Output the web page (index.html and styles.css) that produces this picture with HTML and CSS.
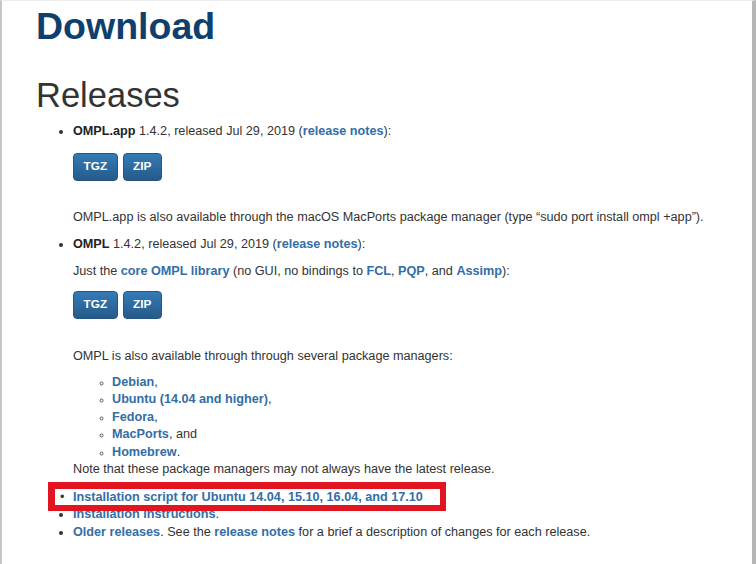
FILE: index.html
```html
<!DOCTYPE html>
<html lang="en">
<head>
<meta charset="utf-8">
<title>Download - OMPL</title>
<link rel="stylesheet" href="styles.css">
</head>
<body>
<div class="frame">
  <main class="content">
    <h1 class="title">Download</h1>
    <h2 class="section">Releases</h2>
    <ul class="releases">
      <li>
        <b>OMPL.app</b> 1.4.2, released Jul 29, 2019 (<a href="#">release notes</a>):
        <div class="btns"><a class="btn" href="#">TGZ</a><a class="btn" href="#">ZIP</a></div>
        <p class="after">OMPL.app is also available through the macOS MacPorts package manager (type “sudo port install ompl +app”).</p>
      </li>
      <li class="gap">
        <b>OMPL</b> 1.4.2, released Jul 29, 2019 (<a href="#">release notes</a>):
        <p class="just">Just the <a href="#">core OMPL library</a> (no GUI, no bindings to <a href="#">FCL</a>, <a href="#">PQP</a>, and <a href="#">Assimp</a>):</p>
        <div class="btns btns2"><a class="btn" href="#">TGZ</a><a class="btn" href="#">ZIP</a></div>
        <p class="after after2">OMPL is also available through through several package managers:</p>
        <ul class="pkgs">
          <li><a href="#">Debian</a>,</li>
          <li><a href="#">Ubuntu (14.04 and higher)</a>,</li>
          <li><a href="#">Fedora</a>,</li>
          <li><a href="#">MacPorts</a>, and</li>
          <li><a href="#">Homebrew</a>.</li>
        </ul>
        Note that these package managers may not always have the latest release.
      </li>
    </ul>
    <ul class="other">
      <li class="marked"><span class="mark"><span class="dot">•</span><a href="#">Installation script for Ubuntu 14.04, 15.10, 16.04, and 17.10</a></span></li>
      <li><a href="#">Installation instructions</a>.</li>
      <li><a href="#">Older releases</a>. See the <a href="#">release notes</a> for a brief a description of changes for each release.</li>
    </ul>
  </main>
</div>
</body>
</html>
```
FILE: styles.css
```css
html, body {
  margin: 0;
  padding: 0;
  background: #ffffff;
}
body {
  font-family: "Liberation Sans", Arial, sans-serif;
  font-size: 12.65px;
  line-height: 17.5px;
  color: #333333;
}
.frame {
  box-sizing: border-box;
  height: 564px;
  border-left: 2px solid #c6c6c6;
  border-right: 4px solid #b6b6b6;
  border-top: 1px solid #ececec;
  overflow: hidden;
}
.content {
  padding-left: 34px;
}
.title {
  margin: 5px 0 0;
  font-size: 37.5px;
  line-height: 40px;
  font-weight: bold;
  color: #0f3f6c;
}
.section {
  margin: 30px 0 0;
  font-size: 34.5px;
  line-height: 38px;
  font-weight: normal;
  color: #333333;
}
a {
  color: #336ea6;
  font-weight: bold;
  text-decoration: none;
}
b { color: #222; }
ul {
  margin: 0;
  padding: 0;
}
.releases {
  margin-top: 9px;
  padding-left: 37px;
}
.releases > li.gap { margin-top: 10px; }
.btns {
  display: flex;
  gap: 5px;
  margin-top: 12px;
}
.btns2 { margin-top: 11px; }
.btn {
  display: flex;
  align-items: center;
  justify-content: center;
  height: 26px;
  padding: 0 9.5px;
  border: 1px solid #245580;
  border-radius: 4px;
  background: linear-gradient(#347bb8, #265a88);
  color: #ffffff;
  font-size: 11.8px;
  font-weight: bold;
}
.after {
  margin: 28px 0 0;
}
.after2 { margin-top: 29px; }
.just {
  margin: 9px 0 0;
}
.pkgs {
  margin: 8px 0 0;
  padding-left: 39px;
  list-style: circle;
}
.pkgs li::marker { font-size: 9px; color: #555; }
.other {
  margin-top: 9px;
  padding-left: 37px;
}
.other li.marked {
  list-style: none;
}
.mark {
  position: relative;
  z-index: 1;
  display: inline-block;
  margin: -6px 0 -5px -25px;
  padding: 1px 17px 0 5px;
  border: 6px solid #e2141f;
  border-top-width: 7px;
  border-left-width: 7px;
  background: #ffffff;
  line-height: 15px;
}
.dot {
  display: inline-block;
  width: 13px;
  color: #333;
}
```
